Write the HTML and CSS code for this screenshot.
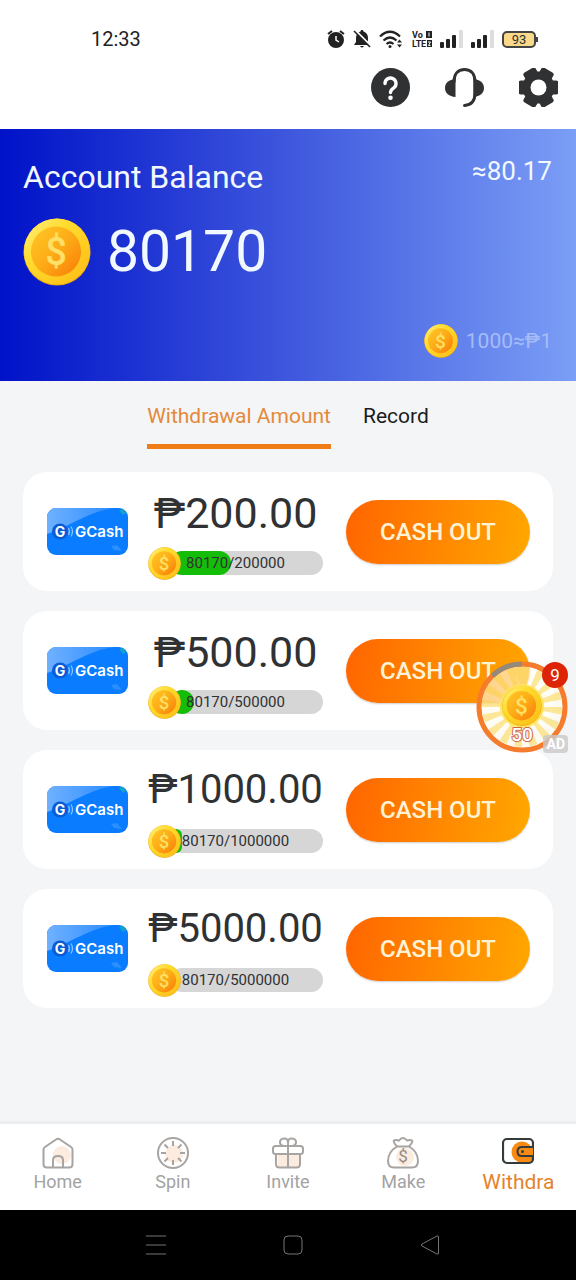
FILE: index.html
```html
<!DOCTYPE html>
<html lang="en">
<head>
<meta charset="utf-8">
<meta name="viewport" content="width=device-width, initial-scale=1">
<title>Account Balance</title>
<link rel="stylesheet" href="styles.css">
</head>
<body>
<svg class="defs" width="0" height="0" aria-hidden="true">
  <defs>
    <linearGradient id="rim" x1="0" y1="0" x2="1" y2="1">
      <stop offset="0" stop-color="#fff08a"/><stop offset=".35" stop-color="#ffdc2e"/><stop offset="1" stop-color="#fdbb14"/>
    </linearGradient>
    <linearGradient id="face" x1="0" y1="0" x2="1" y2="1">
      <stop offset="0" stop-color="#ffc928"/><stop offset=".5" stop-color="#fdab16"/><stop offset="1" stop-color="#f97a08"/>
    </linearGradient>
    <linearGradient id="shine" x1="0" y1="0" x2="1" y2="0">
      <stop offset="0" stop-color="#6fb1ff"/><stop offset="1" stop-color="#2b8cff"/>
    </linearGradient>
    <symbol id="coin" viewBox="0 0 68 68">
      <circle cx="34" cy="34" r="33.500" fill="#e9a410"/>
      <circle cx="34" cy="33.500" r="33" fill="url(#rim)"/>
      <circle cx="33" cy="33.500" r="25" fill="url(#face)"/>
      <text x="33" y="47" text-anchor="middle" font-family="Roboto, sans-serif" font-weight="500" font-size="38" fill="#ffe066">$</text>
    </symbol>
    <symbol id="gcash" viewBox="0 0 81 47">
      <rect width="81" height="47" rx="9" fill="#0a7cff"/>
      <path d="M0 26V9a9 9 0 0 1 9-9H68C42 3 24 18 0 26z" fill="url(#shine)"/>
      <path d="M72 2l4-1 3 4-3 2z" fill="#12a5c8"/>
      <path d="M64 38l6-1 5 6-8-1z" fill="#2b90ff"/>
      <circle cx="13" cy="23.500" r="8" fill="#0a5bd6"/>
      <path d="M21.500 20q2 3.500 0 7M24 18.500q3 5 0 10" fill="none" stroke="#8cc4ff" stroke-width="1.200"/>
      <text x="13" y="28.500" text-anchor="middle" font-family="Inter, sans-serif" font-weight="700" font-size="14" fill="#fff">G</text>
      <text x="28" y="28.500" font-family="Inter, sans-serif" font-weight="600" font-size="15" fill="#fff">GCash</text>
    </symbol>
    <symbol id="signal" viewBox="0 0 23 18">
      <rect x="0" y="12" width="4" height="6" rx="1" fill="#222"/><rect x="6" y="9" width="4" height="9" rx="1" fill="#222"/>
      <rect x="12" y="5" width="4" height="13" rx="1" fill="#222"/><rect x="19" y="0" width="4" height="18" rx="1" fill="#ddd"/>
    </symbol>
  </defs>
</svg>

<div class="page">
  <header class="top">
    <div class="status">
      <span class="clock">12:33</span>
      <svg width="18" height="18" viewBox="0 0 18 18"><circle cx="9" cy="10" r="8" fill="#222"/><path d="M1 4l4-3M17 4l-4-3" stroke="#222" stroke-width="2"/><path d="M9 6v4l3 2" fill="none" stroke="#fff" stroke-width="1.500"/></svg>
      <svg width="18" height="18" viewBox="0 0 18 18"><path d="M9 0c1 0 1.500.6 1.500 1.600C13.500 2.500 15 5 15 8v4l2 3H1l2-3V8c0-3 1.500-5.500 4.500-6.400C7.500.6 8 0 9 0zM7 16h4q-2 3-4 0z" fill="#222"/><path d="M2 0l16 16" stroke="#fff" stroke-width="2"/><path d="M1 1l16 16" stroke="#222" stroke-width="1.600"/></svg>
      <svg width="25" height="18" viewBox="0 0 25 18"><path d="M1 6.500Q11 -3 21 6.500M4.500 10.500Q11 4.500 17.500 10.500M7.500 14Q11 11 14.500 14" fill="none" stroke="#222" stroke-width="2.200"/><circle cx="11" cy="16.500" r="1.500" fill="#222"/><path d="M18 12.500l2.500-3 2.500 3zM18 14.500l2.500 3 2.500-3z" fill="#222"/></svg>
      <svg width="20" height="18" viewBox="0 0 20 18"><g font-family="Roboto, sans-serif" font-weight="700" font-size="9" fill="#222"><text x="0" y="8">Vo</text><text x="0" y="17">LT</text><text x="9" y="17">E</text></g><rect x="14" y="1" width="6" height="7" fill="#222"/><rect x="15" y="10" width="5" height="7" fill="#222"/><path d="M17 2.500v4M16 12h2.500l-2 3.500h2" fill="none" stroke="#fff"/></svg>
      <svg width="23" height="18"><use href="#signal"/></svg>
      <svg width="23" height="18"><use href="#signal"/></svg>
      <span class="battery">93</span>
    </div>
    <div class="actions">
      <button class="icon-btn" aria-label="Help"><svg viewBox="0 0 39 39"><circle cx="19.500" cy="19.500" r="19.500" fill="#303133"/><path d="M14 15.500a5.500 5.500 0 1 1 8.500 4.600c-2 1.300-3 2-3 4.400" fill="none" stroke="#fff" stroke-width="3.400" stroke-linecap="round"/><circle cx="19.500" cy="29.800" r="2.300" fill="#fff"/></svg></button>
      <button class="icon-btn" aria-label="Support"><svg viewBox="0 0 39 39"><path d="M9 14C9 6 13 1.500 19.500 1.500S30 6 30 14V25c0 8-3 12-10.500 12.500" fill="none" stroke="#303133" stroke-width="3" stroke-linecap="round"/><path d="M10.500 11v18C4 28.500 0 25 0 20s4-8.500 10.500-9zM28.500 11v18C35 28.500 39 25 39 20s-4-8.500-10.500-9z" fill="#303133"/></svg></button>
      <button class="icon-btn" aria-label="Settings"><svg viewBox="0 0 39 39"><g fill="#303133"><circle cx="19.500" cy="19.500" r="16"/><rect x="-.5" y="12.500" width="40" height="14" rx="2.500"/><rect x="-.5" y="12.500" width="40" height="14" rx="2.500" transform="rotate(60 19.500 19.500)"/><rect x="-.5" y="12.500" width="40" height="14" rx="2.500" transform="rotate(120 19.500 19.500)"/></g><circle cx="19.500" cy="19.500" r="8" fill="#fff"/></svg></button>
    </div>
  </header>

  <section class="hero">
    <div class="hero-head">
      <h1 class="hero-title">Account Balance</h1>
      <span class="hero-cash">≈80.17</span>
    </div>
    <div class="balance">
      <svg class="coin-lg"><use href="#coin"/></svg>
      <span class="balance-num">80170</span>
    </div>
    <div class="rate">
      <svg class="coin-md"><use href="#coin"/></svg>
      <span>1000≈₱1</span>
    </div>
  </section>

  <main class="main">
    <div class="tabs">
      <button class="tab active">Withdrawal Amount</button>
      <button class="tab">Record</button>
    </div>
    <div class="cards">
      <article class="card">
        <svg class="gcash" role="img" aria-label="GCash"><use href="#gcash"/></svg>
        <div class="info">
          <div class="amount">₱200.00</div>
          <div class="progress"><div class="track"><div class="fill" style="width:40%"></div></div><svg class="coin-sm"><use href="#coin"/></svg><span class="count">80170/200000</span></div>
        </div>
        <button class="cash">CASH OUT</button>
      </article>
      <article class="card">
        <svg class="gcash" role="img" aria-label="GCash"><use href="#gcash"/></svg>
        <div class="info">
          <div class="amount">₱500.00</div>
          <div class="progress"><div class="track"><div class="fill" style="width:16%"></div></div><svg class="coin-sm"><use href="#coin"/></svg><span class="count">80170/500000</span></div>
        </div>
        <button class="cash">CASH OUT</button>
      </article>
      <article class="card">
        <svg class="gcash" role="img" aria-label="GCash"><use href="#gcash"/></svg>
        <div class="info">
          <div class="amount long">₱1000.00</div>
          <div class="progress"><div class="track"><div class="fill" style="width:8%"></div></div><svg class="coin-sm"><use href="#coin"/></svg><span class="count">80170/1000000</span></div>
        </div>
        <button class="cash">CASH OUT</button>
      </article>
      <article class="card">
        <svg class="gcash" role="img" aria-label="GCash"><use href="#gcash"/></svg>
        <div class="info">
          <div class="amount long">₱5000.00</div>
          <div class="progress"><div class="track"><div class="fill" style="width:2%"></div></div><svg class="coin-sm"><use href="#coin"/></svg><span class="count">80170/5000000</span></div>
        </div>
        <button class="cash">CASH OUT</button>
      </article>
    </div>
  </main>

  <nav class="nav">
    <a class="nav-item" href="#home"><svg viewBox="0 0 32 32" fill="none" stroke="#a8a4a1" stroke-width="2"><circle cx="20" cy="18" r="9" fill="#fcebdf" stroke="none"/><path d="M1.500 12.500q0-1.500 1.500-2.500L14 2.500q2-1.500 4 0L29 10q1.500 1 1.500 2.500V27q0 3.500-3.500 3.500H5Q1.500 30.500 1.500 27z"/><path d="M11 30v-7q0-4 5-4t5 4v7"/></svg>Home</a>
    <a class="nav-item" href="#spin"><svg viewBox="0 0 32 32" fill="none" stroke="#a8a4a1" stroke-width="2"><circle cx="17" cy="17" r="9" fill="#fcebdf" stroke="none"/><circle cx="16" cy="16" r="15"/><path d="M16 4v5M16 23v5M4 16h5M23 16h5M7.500 7.500L11 11M21 21l3.500 3.500M24.500 7.500L21 11M11 21l-3.500 3.500"/></svg>Spin</a>
    <a class="nav-item" href="#invite"><svg viewBox="0 0 32 32" fill="none" stroke="#a8a4a1" stroke-width="2"><path d="M6 17h22v13H6z" fill="#fcebdf" stroke="none"/><rect x="1" y="9" width="30" height="8" rx="2.500"/><path d="M4 17v10q0 3.500 3.500 3.500h17q3.500 0 3.500-3.500V17M16 9v21M16 9H11Q8 8 8 5t4-3.500T16 6zM16 9h5q3-1 3-4t-4-3.500T16 6z"/></svg>Invite</a>
    <a class="nav-item" href="#make"><svg viewBox="0 0 32 32" fill="none" stroke="#a8a4a1" stroke-width="2"><circle cx="18" cy="20" r="9" fill="#fcebdf" stroke="none"/><path d="M10 9.500Q4 3 9 3q2 0 3 .5Q14 1 16 1t4 2.500q1-.5 3-.5 5 0-1 6.500zM10 9.500C4 13 1 18 1 24q0 6.500 6 6.500h18q6 0 6-6.500c0-6-3-11-9-14.500"/><text x="16" y="25" text-anchor="middle" font-family="Roboto, sans-serif" font-size="17" fill="#8f8b88" stroke="none">$</text></svg>Make</a>
    <a class="nav-item current" href="#withdraw"><svg viewBox="0 0 32 32" fill="none"><circle cx="20" cy="15" r="10.500" fill="#f98a14"/><path d="M20 12h11v13h-11z" fill="#f98a14"/><rect x="1" y="2" width="30" height="24" rx="4" stroke="#333b3c" stroke-width="2.200"/><path d="M31 10H20q-4.500 0-4.500 4.500T20 19h11" fill="#f98a14" stroke="#333b3c" stroke-width="2"/><circle cx="20.500" cy="14.500" r="1.500" fill="#333b3c"/></svg>Withdra</a>
  </nav>
  <div class="system">
    <button class="sys-btn" aria-label="Recent"><svg viewBox="0 0 20 20"><path d="M0 1h20M0 10h20M0 19h20"/></svg></button>
    <button class="sys-btn" aria-label="Home screen"><svg viewBox="0 0 20 20"><rect x="1" y="1" width="18" height="18" rx="4"/></svg></button>
    <button class="sys-btn" aria-label="Back"><svg viewBox="0 0 20 20"><path d="M18.500 2v16q0 1.500-1.500 1L2 11q-1.500-1 0-2L17 1q1.500-.5 1.500 1z"/></svg></button>
  </div>

  <button class="bonus" aria-label="Bonus coins">
    <svg class="bonus-ring" viewBox="0 0 92 92">
      <circle cx="46" cy="46" r="42" fill="#fffdf0" fill-opacity=".6"/>
      <circle cx="46" cy="46" r="20" fill="none" stroke="#fccf3c" stroke-opacity=".5" stroke-width="40" pathLength="32" stroke-dasharray="1 1"/>
      <circle cx="46" cy="46" r="43" fill="none" stroke="#f57c2c" stroke-width="5"/>
      <path d="M16.500 14.700A43 43 0 0 1 46 3" fill="none" stroke="#938a7c" stroke-width="5"/>
      <circle cx="46" cy="45" r="22" fill="#ffe35a"/>
      <use href="#coin" x="26" y="25" width="40" height="40"/>
      <text x="46" y="80" text-anchor="middle" font-family="Roboto, sans-serif" font-weight="500" font-size="19" fill="#fff" stroke="#cf6650" stroke-width="2" paint-order="stroke">50</text>
    </svg>
    <span class="bonus-count">9</span>
    <span class="bonus-ad">AD</span>
  </button>
</div>
</body>
</html>
```
FILE: styles.css
```css
* { box-sizing: border-box; }
body { margin: 0; background: #f4f5f7; font-family: Roboto, "Noto Sans", sans-serif; color: #303133; }
button { border: 0; padding: 0; background: none; font: inherit; color: inherit; cursor: pointer; }
svg { display: block; flex: none; }
.defs { position: absolute; }
.page { position: relative; min-height: 100vh; display: flex; flex-direction: column; }

.top { background: #fff; padding: 20px 18px 22px 0; }
.status { display: flex; align-items: center; gap: 8px; height: 38px; padding: 0 22px 0 91px; }
.clock { margin-right: auto; font-size: 20px; color: #222; }
.battery { position: relative; width: 34px; height: 17px; border: 2px solid #444; border-radius: 5px; background: #fbd98a; font-size: 13px; line-height: 13px; text-align: center; }
.battery::after { content: ""; position: absolute; right: -4px; top: 4px; width: 2px; height: 5px; background: #444; }
.actions { display: flex; justify-content: flex-end; gap: 35px; margin-top: 10px; }
.icon-btn, .icon-btn svg { width: 39px; height: 39px; }

.hero { background: linear-gradient(90deg, #0012c8, #3e57dd 50%, #7b9ef6); color: #f2f8ff; padding: 28px 24px 23px 23px; }
.hero-head { display: flex; justify-content: space-between; align-items: flex-start; }
.hero-title { margin: 0; font-size: 32px; font-weight: 400; line-height: 40px; }
.hero-cash { font-size: 26px; line-height: 28px; }
.balance { display: flex; align-items: center; gap: 16px; margin-top: 21px; }
.coin-lg { width: 68px; height: 68px; }
.balance-num { font-size: 57px; line-height: 68px; }
.rate { display: flex; align-items: center; justify-content: flex-end; gap: 8px; margin-top: 38px; font-size: 21px; color: #a5bcf7; }
.coin-md { width: 34px; height: 34px; }

.main { flex: 1; padding: 21px 23px 32px; }
.tabs { display: flex; justify-content: center; gap: 32px; }
.tab { padding: 1px 0 15px; border-bottom: 5px solid transparent; font-size: 21px; line-height: 26px; color: #1b1c1e; }
.tab.active { color: #e5893a; border-color: #ee7d16; }
.cards { display: grid; gap: 20px; margin-top: 23px; }
.card { display: flex; align-items: center; min-height: 119px; padding: 0 23px 0 24px; border-radius: 24px; background: #fff; }
.gcash { width: 81px; height: 47px; }
.info { flex: 1; min-width: 0; margin: 0 23px 0 20px; padding-top: 5px; }
.amount { height: 50px; font-size: 43px; line-height: 50px; text-align: center; white-space: nowrap; }
.amount.long { font-size: 40px; line-height: 48px; }
.progress { position: relative; display: flex; align-items: center; height: 34px; margin-top: 8px; }
.track { flex: 1; height: 24px; margin-left: 22px; border-radius: 12px; background: #d6d6d6; }
.fill { height: 24px; border-radius: 12px; background: #14bd08; }
.coin-sm { position: absolute; left: 0; width: 33px; height: 33px; }
.count { position: absolute; left: 0; right: 0; font-size: 15px; text-align: center; }
.cash { flex: none; width: 184px; height: 64px; border-radius: 32px; background: linear-gradient(100deg, #ff6500, #ffa800); box-shadow: 0 1px 2px #0003; color: #fff3d6; font-size: 24px; font-weight: 500; }

.nav { display: grid; grid-template-columns: repeat(5, 1fr); height: 89px; border-top: 3px solid #eceef0; background: #fff; }
.nav-item { display: flex; flex-direction: column; align-items: center; padding-top: 13px; font-size: 18px; line-height: 26px; color: #a3a3a3; text-decoration: none; }
.nav-item svg { width: 32px; height: 32px; }
.nav-item.current { font-size: 21px; color: #e5832c; }
.system { display: flex; align-items: center; justify-content: center; gap: 117px; height: 70px; padding-left: 9px; background: #000; }
.sys-btn svg { width: 20px; height: 20px; fill: none; stroke: #747474; stroke-width: 1; }

.bonus { position: absolute; top: 661px; right: 8px; width: 92px; height: 92px; }
.bonus-ring { width: 92px; height: 92px; }
.bonus-count { position: absolute; top: 1px; right: 0; width: 26px; height: 26px; border-radius: 50%; background: #dd2407; color: #fff; font-size: 17px; line-height: 26px; text-align: center; }
.bonus-ad { position: absolute; right: 0; bottom: 0; padding: 0 3px; border-radius: 4px; background: #c9c9c9cc; color: #fff; font-size: 14px; font-weight: 700; line-height: 18px; }
```
